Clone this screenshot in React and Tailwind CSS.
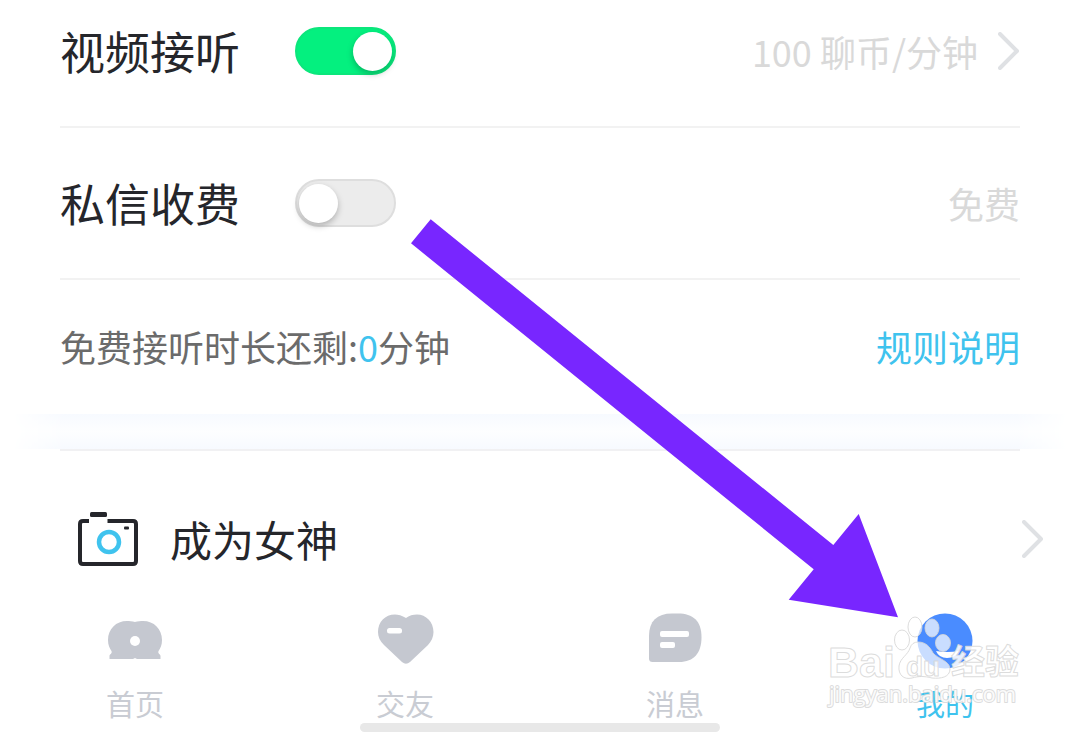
import React, { useState } from 'react';

const Chevron = () => (
    <svg width="22" height="38" viewBox="0 0 22 38" fill="none" stroke="#dfe1e4" strokeWidth="4" className="shrink-0">
        <path d="M2 2 L19 19 L2 36" strokeLinejoin="round" strokeLinecap="round" />
    </svg>
);

const CameraIcon = () => (
    <svg width="60" height="54" viewBox="0 0 60 54" fill="none" className="shrink-0">
        <path
            d="M11 9 H5 Q2 9 2 12 V49 Q2 52 5 52 H55 Q58 52 58 49 V12 Q58 9 55 9 H29.5"
            stroke="#25262b"
            strokeWidth="4"
        />
        <rect x="12" y="0" width="17" height="5" rx="1.5" fill="#25262b" />
        <circle cx="31" cy="30" r="10" stroke="#3fc3ee" strokeWidth="4.5" />
        <rect x="46" y="14.5" width="5" height="3" rx="1" fill="#25262b" />
    </svg>
);

const HomeIcon = () => (
    <svg width="64" height="64" viewBox="0 0 64 64" fill="#c5c8d0">
        <path d="M32 15 C29.5 14 26 14 24 14 C13 14 5 22 5 33 C5 38 6.500 41 8.500 44 C9.500 47 6.500 47 6.500 49 V52 H30 L32 51 L34 52 H57.500 V49 C57.500 47 54.500 47 55.500 44 C57.500 41 59 38 59 33 C59 22 51 14 40 14 C38 14 34.500 14 32 15Z" />
        <circle cx="32" cy="34" r="5" fill="#fff" />
    </svg>
);

const HeartIcon = () => (
    <svg width="64" height="64" viewBox="0 0 64 64" fill="#c5c8d0">
        <path d="M33 11 C29 8.500 25 7.500 22 7.500 C12 7.500 5 15 5 25 C5 30 7 34 11 38 L29 55 Q33 58.500 37 55 L55 38 C58.500 34 60.500 30 60.500 25 C60.500 15 53 7.500 44 7.500 C40 7.500 36 8.500 33 11Z" />
        <rect x="14" y="21" width="15" height="5.500" rx="2.500" fill="#fff" />
    </svg>
);

const MessageIcon = () => (
    <svg width="64" height="64" viewBox="0 0 64 64" fill="#c5c8d0">
        <path d="M6 29 C6 14 14 6.500 29 6.500 H35 C50 6.500 58.500 14 58.500 30 C58.500 46 51 55 36 55 H9.500 Q6 55 6 51.500Z" />
        <rect x="17" y="24" width="29" height="6" rx="2" fill="#fff" />
        <rect x="17" y="35" width="15" height="6" rx="2" fill="#fff" />
    </svg>
);

const ProfileIcon = () => (
    <svg width="64" height="64" viewBox="0 0 64 64">
        <circle cx="32" cy="34" r="27.500" fill="#4a8cff" />
        <path d="M23 44 Q34 46 46 44 Q43 51 34 51 Q26 51 23 44Z" fill="#fff" />
    </svg>
);

const Toggle = ({ id, checked, onChange }) => (
    <input
        id={id}
        type="checkbox"
        role="switch"
        checked={checked}
        onChange={onChange}
        className="flex h-12 w-[101px] shrink-0 appearance-none items-center rounded-full border-2 border-[#dedede] bg-[#ececec] px-[2px] before:size-[39px] before:rounded-full before:bg-white before:shadow-[0_3px_6px_rgba(0,0,0,0.25)] before:content-[''] checked:justify-end checked:border-[#0ce67c] checked:bg-[#04f07f]"
    />
);

const tabs = [
    { name: '首页', Icon: HomeIcon },
    { name: '交友', Icon: HeartIcon },
    { name: '消息', Icon: MessageIcon },
    { name: '我的', Icon: ProfileIcon },
];

const Watermark = () => (
    <svg
        width="210"
        height="100"
        viewBox="820 610 210 100"
        className="pointer-events-none absolute right-[50px] bottom-[23px]"
        fill="#fff"
        fillOpacity="0.7"
        stroke="#d6d6d6"
        strokeWidth="1"
        strokeOpacity="0.85"
        strokeLinejoin="round"
    >
        <ellipse cx="902" cy="641" rx="7.500" ry="10" />
        <ellipse cx="915" cy="628" rx="7" ry="10" />
        <ellipse cx="932" cy="629" rx="7" ry="9" />
        <ellipse cx="943" cy="644" rx="7.500" ry="8.500" />
        <path d="M918 643 C926 643 930 648 933 654 C938 660 950 662 950 670 C950 678 941 680 932 679 C924 677 919 677 912 679 C904 681 898 676 899 667 C900 659 908 656 910 649 Q912 643 918 643Z" />
        <text x="828" y="678" className="font-['Liberation_Sans',sans-serif] text-[43px] font-bold">Bai</text>
        <text x="906" y="677" className="font-['Liberation_Sans',sans-serif] text-[28px] font-bold">du</text>
        <text x="951" y="675" className="font-['Noto_Sans_CJK_SC',sans-serif] text-[34px] font-bold" fillOpacity="0.9">经验</text>
        <text
            x="829"
            y="703"
            className="font-['Open_Sans',sans-serif] text-[22px] font-medium"
            fillOpacity="0.9"
            strokeWidth="2"
            paintOrder="stroke"
        >
            jingyan.baidu.com
        </text>
    </svg>
);

export default function App() {
    const [video, setVideo] = useState(true);
    const [charge, setCharge] = useState(false);
    const [active, setActive] = useState('我的');

    return (
        <div className="relative overflow-hidden bg-white font-['Noto_Sans_CJK_SC',sans-serif] text-[#25262b]">
            <main>
                <section className="px-[60px]">
                    <div className="flex items-center justify-between border-b-2 border-[#f2f2f2] pt-[18px] pb-[42px]">
                        <div className="flex items-center gap-[55px]">
                            <label htmlFor="video" className="text-[45px] leading-[66px]">视频接听</label>
                            <Toggle id="video" checked={video} onChange={() => setVideo(!video)} />
                        </div>
                        <button type="button" className="flex items-center gap-5 text-[36px] leading-[66px] text-[#d9d9d9]">
                            100 聊币/分钟
                            <Chevron />
                        </button>
                    </div>
                    <div className="flex items-center justify-between border-b-2 border-[#f2f2f2] py-[42px]">
                        <div className="flex items-center gap-[55px]">
                            <label htmlFor="charge" className="text-[45px] leading-[66px]">私信收费</label>
                            <Toggle id="charge" checked={charge} onChange={() => setCharge(!charge)} />
                        </div>
                        <span className="text-[36px] leading-[66px] text-[#d9d9d9]">免费</span>
                    </div>
                    <div className="flex items-center justify-between pt-[33px] pb-[35px] text-[36px] leading-[66px]">
                        <p className="text-[#6b6b6b]">
                            免费接听时长还剩:<span className="text-[#3fc3ee]">0</span>分钟
                        </p>
                        <a href="#rules" className="text-[#3fc3ee]">规则说明</a>
                    </div>
                </section>

                {/* soft divider between the two groups */}
                <div className="mx-3 h-[35px] bg-linear-to-b from-[#f7faff] via-[#fdfeff] to-[#f7faff] [mask-image:linear-gradient(to_right,transparent,black_5%,black_95%,transparent)]" />
                <div className="mx-[60px] h-[2px] bg-[#f1f1f3]" />

                <a href="#goddess" className="flex items-center justify-between pt-[55px] pr-9 pb-[35px] pl-[78px]">
                    <span className="flex items-center gap-8">
                        <CameraIcon />
                        <span className="text-[42px] leading-[66px]">成为女神</span>
                    </span>
                    <Chevron />
                </a>
            </main>

            <nav className="grid grid-cols-4">
                {tabs.map(({ name, Icon }) => (
                    <button
                        key={name}
                        type="button"
                        onClick={() => setActive(name)}
                        className={`flex flex-col items-center gap-3 text-[29px] leading-10 ${active === name ? 'text-[#3fc3ee]' : 'text-[#c9ccd3]'}`}
                    >
                        <Icon />
                        {name}
                    </button>
                ))}
            </nav>
            <div className="mx-auto h-[9px] w-1/3 rounded-full bg-[#e8e8e8]" />

            <svg width="500" height="410" viewBox="405 215 500 410" className="pointer-events-none absolute top-[215px] left-[405px]">
                <polygon points="430.700,219.300 833.300,545 858.700,514 898,617.300 788.700,599.700 813.700,569.300 411,243.300" fill="#7826ff" />
            </svg>
            <Watermark />
        </div>
    );
}
